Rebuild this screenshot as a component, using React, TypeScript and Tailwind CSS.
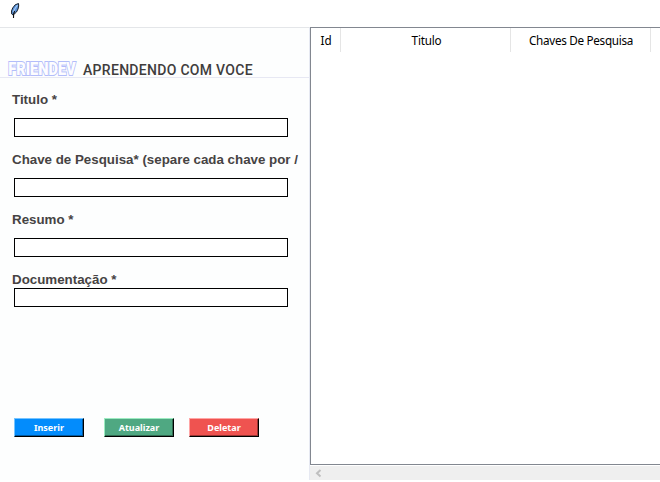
import React from "react";

function FieldRow({ label, compact = false }: { label: string; compact?: boolean }) {
  return (
    <div className={compact ? "h-[48px]" : "h-[60px]"}>
      <div
        className={`whitespace-nowrap pl-[12px] text-[13.33px] leading-[18px] font-bold text-[#464343] ${compact ? "h-[17px]" : "h-[27px]"}`}
      >
        {label}
      </div>
      <input
        type="text"
        aria-label={label}
        className="ml-[14px] block h-[19px] w-[274px] border border-black bg-white px-1 text-xs outline-none"
      />
    </div>
  );
}

function ActionButton({ label, tone }: { label: string; tone: string }) {
  return (
    <button
      type="button"
      className={`flex h-[19px] w-[70px] justify-center border border-r-black border-b-black pt-px font-['Noto_Sans',sans-serif] text-[9px] leading-[15px] font-bold text-white shadow-[inset_-1px_-1px_0_rgba(0,0,0,0.35)] ${tone}`}
    >
      {label}
    </button>
  );
}

function Feather() {
  return (
    <svg className="h-[17px] w-[11px]" viewBox="0 0 11 17">
      <path d="M8.5 1.5 8.7 4 8 7 6.5 10 4 12.3 3 13 1.7 12 1.5 9 2.7 6 5.2 2.8Z" fill="#5990d8" stroke="#17202b" strokeWidth="1" />
      <path d="M7.5 3 5 6.5 3.2 10" fill="none" stroke="#a6cdf8" strokeWidth="1.2" />
      <path d="M4.6 9 3.6 12 3.5 16" fill="none" stroke="#101010" strokeWidth="1.1" />
    </svg>
  );
}

function Logo() {
  return (
    <svg className="ml-[7px] h-[18px] w-[71px]" viewBox="0 0 71 18">
      <text
        x="1.2"
        y="16"
        textLength="67.5"
        lengthAdjust="spacingAndGlyphs"
        fontFamily="Roboto, sans-serif"
        fontWeight="900"
        fontSize="19"
        fill="#fdfdff"
        stroke="#b3bdfa"
        strokeWidth="2"
        paintOrder="stroke"
      >
        FRIENDEV
      </text>
    </svg>
  );
}

export default function App() {
  return (
    <main className="h-[482px] w-[660px] overflow-hidden bg-white font-['Liberation_Sans',Arial,sans-serif]">
      <header className="flex h-[27px] bg-white pt-[2px] pl-[10px]">
        <Feather />
      </header>
      <div className="flex h-[453px]">
        <section className="w-[310px] shrink-0 border-t border-r border-t-[#e4e6e9] border-r-[#e6e9f2] bg-[#fdfefe]">
          <div className="flex h-[50px] items-end border-b border-[#e7e8f3]">
            <Logo />
            <h1 className="ml-[5px] h-[16px] whitespace-nowrap font-['Roboto',sans-serif] text-[14px] leading-[18px] font-medium tracking-[0.3px] text-[#403d3d]">
              APRENDENDO COM VOCE
            </h1>
          </div>
          <form className="pt-[13px]" onSubmit={(e) => e.preventDefault()}>
            <FieldRow label="Titulo *" />
            <FieldRow label="Chave de Pesquisa* (separe cada chave por /" />
            <FieldRow label="Resumo *" />
            <FieldRow label="Documentação *" compact />
            <div className="flex pt-[99px] pl-[14px]">
              <ActionButton label="Inserir" tone="bg-[#038cfc] border-t-[#75c4ff] border-l-[#75c4ff]" />
              <div className="ml-5 flex gap-[15px]">
                <ActionButton label="Atualizar" tone="bg-[#4fa882] border-t-[#9cecc1] border-l-[#9cecc1]" />
                <ActionButton label="Deletar" tone="bg-[#ef5350] border-t-[#ffa5a5] border-l-[#ffa5a5]" />
              </div>
            </div>
          </form>
        </section>
        <section className="flex w-[350px] flex-col">
          <div className="h-[438px] border-t border-b border-l border-[#828790] bg-white">
            <div className="flex h-[24px] text-center font-['Noto_Sans',sans-serif] text-[11.7px] leading-[24px] text-black">
              <div className="w-[30px] border-r border-[#e5e5e5] pl-px">Id</div>
              <div className="w-[170px] border-r border-[#e5e5e5] pl-[2px] tracking-[-0.2px]">Titulo</div>
              <div className="w-[140px] border-r border-[#e5e5e5] pl-px tracking-[-0.3px]">Chaves De Pesquisa</div>
            </div>
          </div>
          <div className="mt-px h-[14px] bg-[#efefef] pt-[3px] pl-[5px]">
            <svg className="block h-[9px] w-[7px]" viewBox="0 0 7 9">
              <path d="M5.5 1 2 4.3 5.5 7.6" fill="none" stroke="#bfbfbf" strokeWidth="2" />
            </svg>
          </div>
        </section>
      </div>
    </main>
  );
}
